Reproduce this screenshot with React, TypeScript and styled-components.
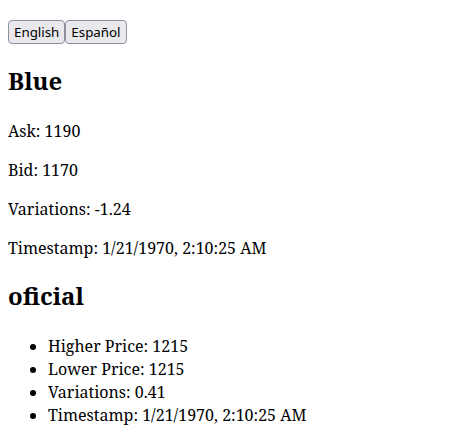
import React, { FC } from "react";
import styled, { createGlobalStyle } from "styled-components";

const GlobalStyle = createGlobalStyle`
	body {
		margin: 8px;
		background: #fff;
		color: #000;
		font-family: "Noto Serif", "DejaVu Serif", serif;
		font-size: 16px;
		line-height: 23px;
	}
`;

const blue = [
	{ label: "Ask", value: "1190" },
	{ label: "Bid", value: "1170" },
	{ label: "Variations", value: "-1.24" },
	{ label: "Timestamp", value: "1/21/1970, 2:10:25 AM" },
];

const oficial = [
	{ label: "Higher Price", value: "1215" },
	{ label: "Lower Price", value: "1215" },
	{ label: "Variations", value: "0.41" },
	{ label: "Timestamp", value: "1/21/1970, 2:10:25 AM" },
];

const App: FC = () => {
	return (
		<>
			<GlobalStyle />
			<Nav>
				<NavItem>
					<NavLink href="#">Dólares</NavLink>
				</NavItem>
			</Nav>
			<LangBar>
				<LangButton>English</LangButton>
				<LangButton>Español</LangButton>
			</LangBar>
			<Title>Blue</Title>
			{blue.map((row) => (
				<Line key={row.label}>
					{row.label}: {row.value}
				</Line>
			))}
			<Title $top={19}>oficial</Title>
			<PriceList>
				{oficial.map((row) => (
					<li key={row.label}>
						{row.label}: {row.value}
					</li>
				))}
			</PriceList>
		</>
	);
};

export default App;

// the page is shown scrolled a little, so only the link's underline peeks in
const Nav = styled.ul`
	margin: -30px 0 19px;
	padding-left: 40px;
`;

const NavItem = styled.li`
	list-style: none;
`;

const NavLink = styled.a`
	color: #0000ee;
	text-decoration: none;
	border-bottom: 1px solid #0000ee;
`;

const LangBar = styled.div`
	display: flex;
`;

const LangButton = styled.button`
	font-family: "Noto Sans", "Open Sans", sans-serif;
	font-size: 13.33px;
	line-height: 18px;
	color: #000;
	background: #e9e9ed;
	border: 1px solid #8f8f9d;
	border-radius: 4px;
	padding: 2px 5px;
`;

const Title = styled.h2<{ $top?: number }>`
	font-size: 1.5em;
	line-height: 34px;
	font-weight: 700;
	margin: ${({ $top = 20 }) => $top}px 0 22px;
`;

const Line = styled.p`
	margin: 1em 0;
`;

const PriceList = styled.ul`
	margin: 1em 0;
	padding-left: 40px;
`;
